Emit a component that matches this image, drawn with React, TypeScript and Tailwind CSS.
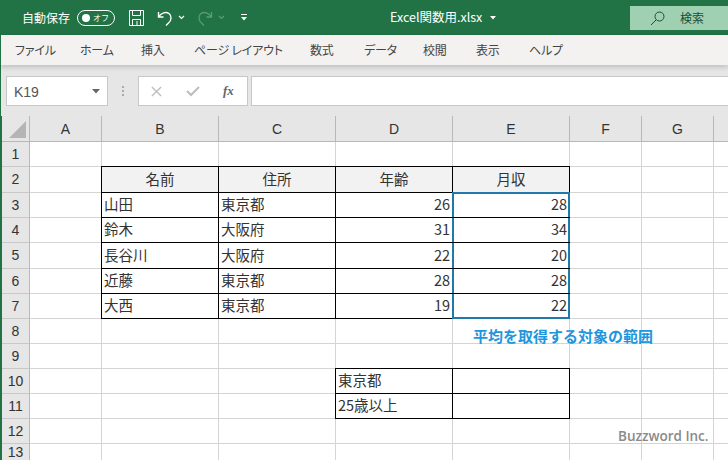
import React from "react";

const JP = "font-['Noto_Sans_CJK_JP','Liberation_Sans',sans-serif]";
const colW = [72, 117, 117, 117, 117, 72, 72, 15];
const rowH = [26, 25, 26, 25, 25, 26, 25, 25, 25, 25, 25, 25, 25, 17];
const cols = ["A", "B", "C", "D", "E", "F", "G", ""];

type C = { t: string; r?: boolean; c?: boolean; h?: boolean };
const data: Record<string, C> = {
  "2B": { t: "名前", c: true, h: true }, "2C": { t: "住所", c: true, h: true }, "2D": { t: "年齢", c: true, h: true }, "2E": { t: "月収", c: true, h: true },
  "3B": { t: "山田" }, "3C": { t: "東京都" }, "3D": { t: "26", r: true }, "3E": { t: "28", r: true },
  "4B": { t: "鈴木" }, "4C": { t: "大阪府" }, "4D": { t: "31", r: true }, "4E": { t: "34", r: true },
  "5B": { t: "長谷川" }, "5C": { t: "大阪府" }, "5D": { t: "22", r: true }, "5E": { t: "20", r: true },
  "6B": { t: "近藤" }, "6C": { t: "東京都" }, "6D": { t: "28", r: true }, "6E": { t: "28", r: true },
  "7B": { t: "大西" }, "7C": { t: "東京都" }, "7D": { t: "19", r: true }, "7E": { t: "22", r: true },
  "10D": { t: "東京都" }, "10E": { t: "" },
  "11D": { t: "25歳以上" }, "11E": { t: "" },
};

const tabs = [
  ["ファイル", "w-[37px]"], ["ホーム", "w-[33px]"], ["挿入", "w-[25px]"], ["ページ レイアウト", "w-[88px]"],
  ["数式", "w-[26px]"], ["データ", "w-[31px]"], ["校閲", "w-[25px]"], ["表示", "w-[25px]"], ["ヘルプ", "w-[32px]"],
];

const leftEdge = new Set(["2B", "3B", "4B", "5B", "6B", "7B", "10D", "11D"]);
const topEdge = new Set(["2B", "2C", "2D", "2E", "10D", "10E"]);

function Cell({ id, col, row }: { id: string; col: number; row: number }) {
  const d = data[id];
  const selected = col === 4 && row >= 3 && row <= 7;
  const border = d
    ? "border-r border-b border-r-black border-b-black"
    : "border-r border-b border-r-[#d4d4d4] border-b-[#d4d4d4]";
  const align = d?.c ? "justify-center" : d?.r ? "justify-end pr-[2px]" : "justify-start pl-[2px]";
  return (
    <div className={`relative flex items-center overflow-visible pb-[1px] text-[14.500px] text-[#333] ${JP} ${border} ${align} ${d?.h ? "bg-[#f2f2f2]" : "bg-white"}`}>
      <span className="leading-none">{d?.t}</span>
      {selected && <div className={`absolute left-[-1px] right-[-1px] border-x-2 border-[#1f7aa8] ${row === 3 ? "top-[-1px] border-t-2" : "top-0"} ${row === 7 ? "bottom-[-1px] border-b-2" : "bottom-0"}`} />}
      {topEdge.has(id) && <div className="absolute inset-x-[-1px] top-[-1px] h-px bg-black" />}
      {leftEdge.has(id) && <div className="absolute inset-y-[-1px] left-[-1px] w-px bg-black" />}
    </div>
  );
}

export default function App() {
  return (
    <div className="w-[728px] h-[460px] overflow-hidden flex flex-col bg-[#e6e6e6] font-['Liberation_Sans',sans-serif]">
      {/* title bar */}
      <div className="h-[35px] shrink-0 bg-[#217346] flex items-center text-white relative">
        <span className={`ml-[22px] text-[12px] ${JP}`}>自動保存</span>
        <div className="ml-[7px] w-[38px] h-[16px] rounded-full border border-white flex items-center justify-between px-[4px]">
          <span className="w-[8px] h-[8px] rounded-full bg-white" />
          <span className={`text-[8px] leading-none mr-[1px] ${JP}`}>オフ</span>
        </div>
        <svg className="ml-[13px]" width="17" height="18" viewBox="0 0 17 18" fill="none" stroke="white" strokeWidth="1">
          <path d="M1.5 1.5h14v15h-14z" /><path d="M4.5 1.5v5h8v-5M4.5 16.500v-6h8v6M9 12v4" />
        </svg>
        <svg className="ml-[12px]" width="16" height="18" viewBox="0 0 16 18" fill="none" stroke="white" strokeWidth="1.400">
          <path d="M1.500 3v5h5M1.500 8C4 3.500 9 2.500 12 4.500c3 2.300 2.500 7-.5 9.500l-2.500 2.500" />
        </svg>
        <svg className="ml-[5px]" width="7" height="5" viewBox="0 0 7 5" fill="none" stroke="white" strokeWidth="1.200"><path d="M1 1l2.500 2.500L6 1" /></svg>
        <svg className="ml-[12px]" width="16" height="18" viewBox="0 0 16 18" fill="none" stroke="#5d9a79" strokeWidth="1.300">
          <path d="M14.500 3v5h-5M14.500 8C12 3.500 7 2.500 4 4.500c-3 2.300-2.500 7 .5 9.500l2.500 2.500" />
        </svg>
        <svg className="ml-[5px]" width="7" height="5" viewBox="0 0 7 5" fill="none" stroke="#5d9a79" strokeWidth="1.200"><path d="M1 1l2.500 2.500L6 1" /></svg>
        <svg className="ml-[16px]" width="6" height="7" viewBox="0 0 6 7" fill="white"><path d="M0 0h6v1H0zM0 3h6L3 6.500z" /></svg>
        <span className={`absolute left-[390px] text-[12.500px] ${JP}`}>Excel関数用.xlsx</span>
        <svg className="absolute left-[490px] top-[16px]" width="6" height="4" viewBox="0 0 6 4" fill="white"><path d="M0 0h6L3 3.500z" /></svg>
        <div className="absolute left-[630px] top-[6px] w-[98px] h-[24px] bg-[#9fd0b1] flex items-center text-[#1e4d33]">
          <svg className="ml-[20px]" width="15" height="15" viewBox="0 0 15 15" fill="none" stroke="#1e4d33" strokeWidth="1">
            <circle cx="9.500" cy="5.500" r="4.500" /><path d="M6 9l-5 5" />
          </svg>
          <span className={`ml-[15px] text-[12px] ${JP}`}>検索</span>
        </div>
      </div>
      {/* ribbon */}
      <div className="h-[30px] shrink-0 bg-[#f3f2f1] flex items-center gap-[28px] pl-[14px] shadow-[0_2px_5px_rgba(0,0,0,0.18)] z-10 border-l border-l-[#217346]">
        {tabs.map(([t, c]) => (
          <span key={t} className={`text-[12px] text-[#444] text-left whitespace-nowrap tracking-[-0.2px] [font-feature-settings:'palt'] ${JP} ${c}`}>{t}</span>
        ))}
      </div>
      {/* formula bar */}
      <div className="h-[51px] shrink-0 flex pt-[11px] pb-[10px] border-l border-l-[#217346]">
        <div className="ml-[5px] w-[102px] bg-white border border-[#c8c8c8] flex items-center justify-between pl-[7px] pr-[7px]">
          <span className="text-[14px] text-[#555] pt-[3px]">K19</span>
          <svg width="8" height="5" viewBox="0 0 8 5" fill="#666"><path d="M0 0h8L4 4.500z" /></svg>
        </div>
        <div className="w-[30px] flex flex-col items-center justify-center gap-[2px]">
          <span className="w-[2px] h-[2px] bg-[#aaa]" /><span className="w-[2px] h-[2px] bg-[#aaa]" /><span className="w-[2px] h-[2px] bg-[#aaa]" />
        </div>
        <div className="w-[110px] bg-white border border-[#c8c8c8] flex items-center">
          <svg className="ml-[12px]" width="11" height="11" viewBox="0 0 12 12" stroke="#bdbdbd" strokeWidth="1.500"><path d="M1 1l10 10M11 1L1 11" /></svg>
          <svg className="ml-[24px]" width="14" height="12" viewBox="0 0 14 12" fill="none" stroke="#bdbdbd" strokeWidth="2"><path d="M1 6l4 4 8-8" /></svg>
          <span className="ml-[23px] text-[13px] italic font-bold text-[#666] font-['Liberation_Serif',serif]">fx</span>
        </div>
        <div className="ml-[3px] flex-1 bg-white border-y border-l border-[#c8c8c8]" />
      </div>
      {/* sheet */}
      <div
        className="relative flex-1 grid border-l-2 border-l-[#217346] bg-white"
        style={{ gridTemplateColumns: `28px ${colW.map((w) => w + "px").join(" ")}`, gridTemplateRows: rowH.map((h) => h + "px").join(" ") }}
      >
        <div className="bg-[#e6e6e6] border-r border-b border-[#b8b8b8] relative overflow-hidden">
          <div className="absolute right-[3px] bottom-[3px] w-0 h-0 border-l-[17px] border-l-transparent border-b-[17px] border-b-[#b5b5b5]" />
        </div>
        {cols.map((c) => (
          <div key={"h" + c} className="bg-[#e6e6e6] border-r border-b border-r-[#b8b8b8] border-b-[#b8b8b8] flex items-center justify-center pt-[1px] text-[14px] text-[#333]">{c}</div>
        ))}
        {rowH.slice(1).map((_, i) => {
          const row = i + 1;
          return (
            <React.Fragment key={row}>
              <div className="bg-[#e6e6e6] border-r border-b border-r-[#b8b8b8] border-b-[#c8c8c8] flex items-center justify-center text-[14px] text-[#333]">{row}</div>
              {cols.map((c, ci) => <Cell key={c + ci} id={`${row}${c}`} col={ci} row={row} />)}
            </React.Fragment>
          );
        })}
        <span className={`absolute left-[471px] top-[210px] text-[15px] font-bold leading-[20px] text-[#2196dc] whitespace-nowrap ${JP}`}>平均を取得する対象の範囲</span>
        <span className="absolute left-[616px] top-[311px] text-[13.500px] font-semibold leading-[18px] text-[#8a8a8a] whitespace-nowrap font-['Open_Sans',sans-serif]">Buzzword Inc.</span>
      </div>
    </div>
  );
}
